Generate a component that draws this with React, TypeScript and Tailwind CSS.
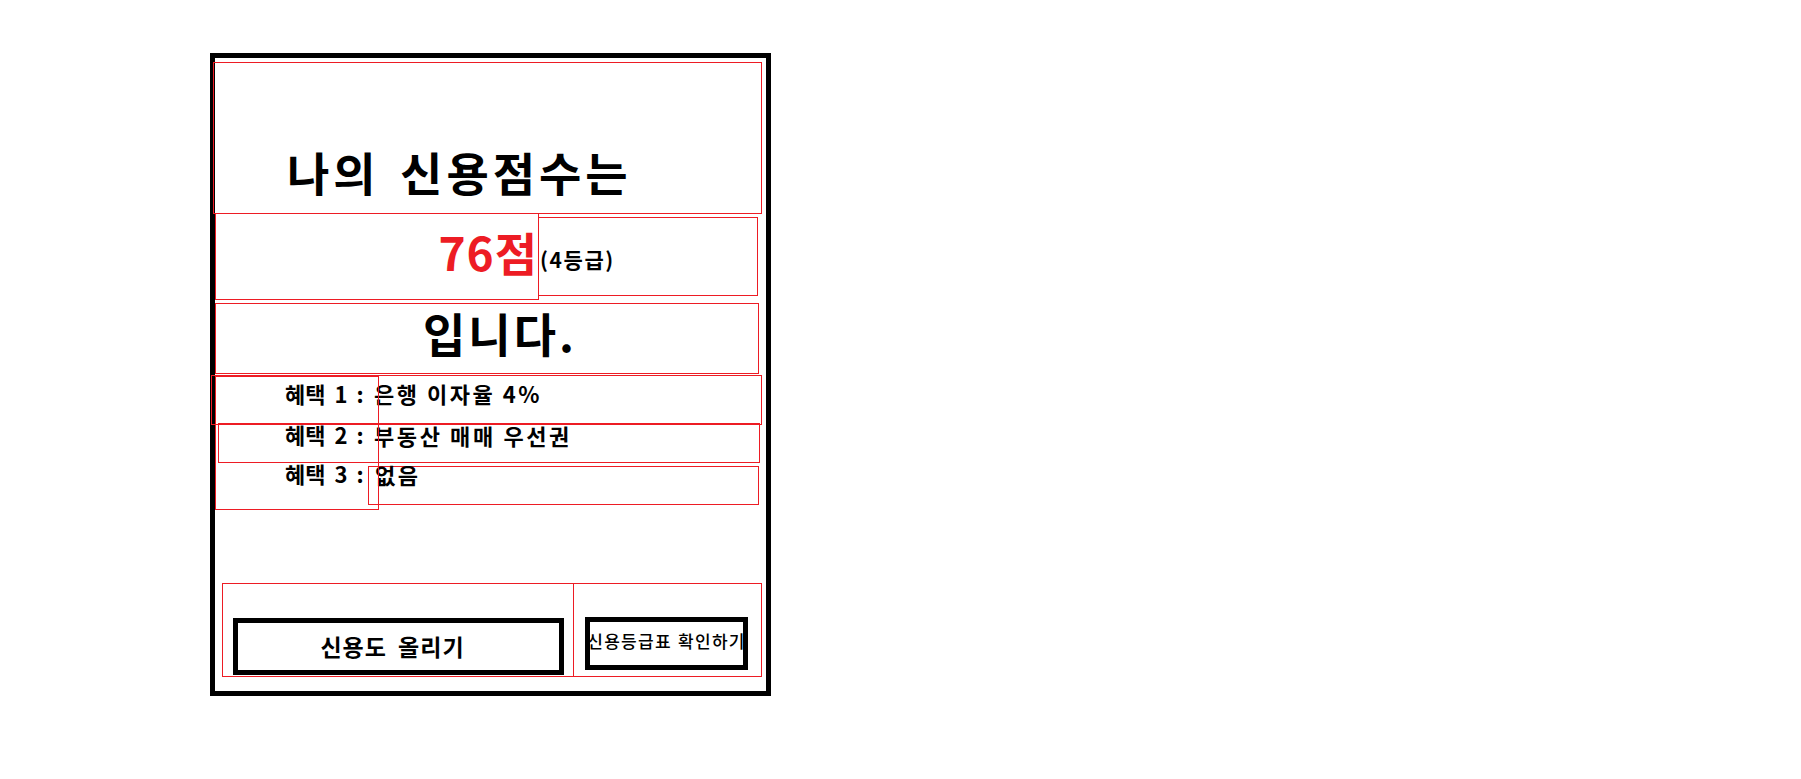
export default function App() {
  return (
    <div className="min-h-screen w-full bg-white pl-[210px] pt-[53px] text-black [font-family:'Noto_Sans_CJK_KR','Noto_Sans',sans-serif]">
      <div className="box-border flex h-[643px] w-[561px] flex-col border-[5px] border-black">
        {/* title */}
        <div className="ml-[-2px] mt-[4px] h-[152px] w-[549px] shrink-0 border border-[#ed1c24] pl-[73px] pt-[85px]">
          <h1 className="whitespace-nowrap text-[46px] font-bold leading-none tracking-[4px] [word-spacing:6px]">
            나의 신용점수는
          </h1>
        </div>

        {/* score row */}
        <div className="-mt-px flex shrink-0 items-center">
          <div className="flex h-[87px] w-[324px] items-center justify-end border border-[#ed1c24] pb-[11px]">
            <span className="text-[46px] font-bold leading-none tracking-[1px] text-[#ed1c24]">76점</span>
          </div>
          <div className="-ml-px flex h-[79px] w-[220px] items-center border border-[#ed1c24] pl-px pt-[5px]">
            <span className="text-[21px] font-bold leading-none tracking-[1.6px]">(4등급)</span>
          </div>
        </div>

        {/* 입니다 */}
        <div className="mt-[3px] h-[71px] w-[544px] shrink-0 border border-[#ed1c24] pl-[207px] pt-[5px]">
          <p className="text-[46px] font-bold leading-none tracking-[3px]">입니다.</p>
        </div>

        {/* benefits */}
        <div className="mt-px grid shrink-0 grid-cols-[153px_1fr] grid-rows-[50px_38px_42px] text-[22px] font-bold leading-none">
          <div className="col-start-1 col-end-3 row-start-1 ml-[-4px] h-[50px] w-[551px] whitespace-nowrap border border-[#ed1c24] pl-[162px] pt-[6px] tracking-[2.5px]">
            은행 이자율 4%
          </div>
          <div className="col-start-1 col-end-3 row-start-2 ml-[3px] mt-[-2px] h-[40px] w-[542px] whitespace-nowrap border border-[#ed1c24] pl-[155px] tracking-[2.6px]">
            부동산 매매 우선권
          </div>
          <div className="col-start-2 col-end-3 row-start-3 mt-[3px] h-[39px] w-[391px] whitespace-nowrap border border-[#ed1c24] pl-[6px] tracking-[2.5px]">
            <div className="-mt-[4px]">없음</div>
          </div>
          <div className="col-start-1 col-end-2 row-start-1 row-end-4 mt-px h-[134px] w-[164px] self-start border border-[#ed1c24] pl-[69px] [word-spacing:4px]">
            <div className="mt-[5px] whitespace-nowrap">혜택 1 :</div>
            <div className="mt-[19px] whitespace-nowrap">혜택 2 :</div>
            <div className="mt-[17px] whitespace-nowrap">혜택 3 :</div>
          </div>
        </div>

        {/* buttons */}
        <div className="mb-[14px] ml-[7px] mt-auto flex h-[94px] shrink-0">
          <div className="flex h-[94px] w-[352px] items-end border border-[#ed1c24] pb-px pl-[10px]">
            <button className="flex h-[57px] w-[331px] items-center justify-center border-[5px] border-black bg-white pr-[12px] text-[23px] font-bold leading-none tracking-[1px] text-black [word-spacing:5px]">
              신용도 올리기
            </button>
          </div>
          <div className="-ml-px flex h-[94px] w-[189px] items-end border border-[#ed1c24] pb-[6px] pl-[11px]">
            <button className="flex h-[53px] w-[163px] items-center justify-center overflow-hidden whitespace-nowrap border-[5px] border-black bg-white p-0 pb-[6px] text-[17px] font-medium leading-none tracking-[1.3px] text-black [word-spacing:1px]">
              신용등급표 확인하기
            </button>
          </div>
        </div>
      </div>
    </div>
  );
}
